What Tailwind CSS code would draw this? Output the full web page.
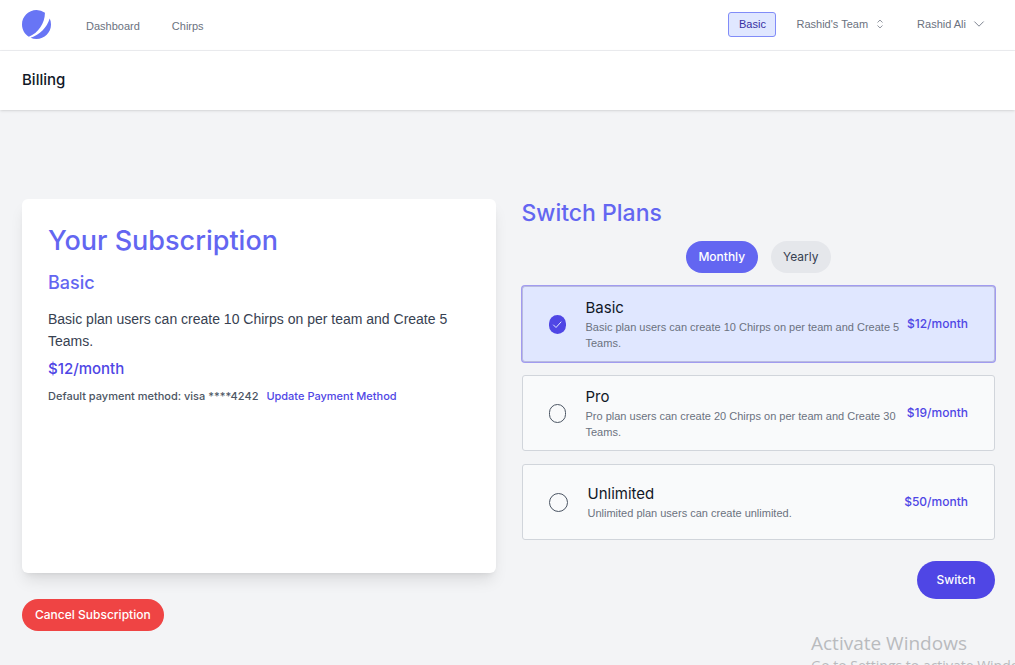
<!DOCTYPE html>
<html lang="en">
<head>
<meta charset="utf-8">
<meta name="viewport" content="width=device-width, initial-scale=1">
<title>Billing</title>
<script src="https://cdn.jsdelivr.net/npm/@tailwindcss/browser@4"></script>
</head>
<body class="relative h-screen overflow-hidden bg-[#f3f4f6] font-['Inter',sans-serif] text-[#111827]">
  <nav class="flex h-[51px] items-center border-b border-[#edeef1] bg-white pl-[22px] pr-[29px] font-['Liberation_Sans',sans-serif] text-[11px] text-[#6b7280]">
    <a href="#" aria-label="Home" class="mb-[2px]">
      <svg class="size-[29px]" viewBox="0 0 48 48" fill="#6875f5"><path d="M11.395 44.428C4.557 40.198 0 32.632 0 24 0 10.745 10.745 0 24 0a23.891 23.891 0 0113.997 4.502c-.2 17.907-11.097 33.245-26.602 39.926z"/><path d="M14.134 45.885A23.914 23.914 0 0024 48c13.255 0 24-10.745 24-24 0-3.516-.756-6.856-2.115-9.866-4.659 15.143-16.608 27.092-31.75 31.751z"/></svg>
    </a>
    <a href="#" class="ml-[35px] pt-[2px]">Dashboard</a>
    <a href="#" class="ml-8 pt-[2px]">Chirps</a>
    <button type="button" class="ml-auto mb-[2px] h-[25px] w-12 rounded-[3px] border border-[#818cf8] bg-[#e0e7ff] text-[#3730a3]">Basic</button>
    <button type="button" class="ml-5 mb-[2px] flex items-center gap-[5px]">Rashid's Team
      <svg class="size-[14px]" viewBox="0 0 24 24" fill="none" stroke="#7b818d" stroke-width="1.5" stroke-linecap="round" stroke-linejoin="round"><path d="M8.25 15L12 18.75 15.75 15m-7.5-6L12 5.25 15.75 9"/></svg>
    </button>
    <button type="button" class="ml-[30px] mb-[2px] flex items-center gap-[6px]">Rashid Ali
      <svg class="size-[14px]" viewBox="0 0 24 24" fill="none" stroke="#6b7280" stroke-width="1.5" stroke-linecap="round" stroke-linejoin="round"><path d="M19.5 8.25l-7.5 7.5-7.5-7.5"/></svg>
    </button>
  </nav>
  <header class="flex h-[59px] items-center bg-white px-[22px] shadow">
    <h1 class="text-[15px] font-medium">Billing</h1>
  </header>

  <main class="grid grid-cols-2 gap-x-[26px] pl-[22px] pr-5 pt-[89px]">
    <div class="flex flex-col items-start gap-[26px]">
      <section class="h-[374px] w-full rounded-md bg-white px-[26px] pt-6 shadow-lg">
        <h2 class="text-[27px] leading-9 font-medium text-[#6366f1]">Your Subscription</h2>
        <h3 class="mt-[10px] text-[18px] leading-7 font-medium text-[#6366f1]">Basic</h3>
        <p class="mt-[11px] font-['Liberation_Sans',sans-serif] text-[14px] leading-[22px] text-[#374151]">Basic plan users can create 10 Chirps on per team and Create 5 Teams.</p>
        <p class="mt-[6px] text-[15px] leading-[22px] font-medium text-[#4f46e5]">$12/month</p>
        <p class="mt-2 text-[11px] leading-4 font-medium text-[#4b5563]">Default payment method: visa ****4242 <a href="#" class="ml-[5px] text-[#4f46e5]">Update Payment Method</a></p>
      </section>
      <button type="button" class="h-8 rounded-full bg-[#ef4444] px-[13px] text-[12px] font-medium text-white">Cancel Subscription</button>
    </div>

    <form class="flex flex-col" onsubmit="return false">
      <h2 class="text-[23px] leading-7 font-medium text-[#6366f1]">Switch Plans</h2>
      <div class="mt-[14px] flex justify-center gap-[13px] text-[12px]">
        <button type="button" class="h-8 w-[72px] rounded-full bg-[#6366f1] font-medium text-white">Monthly</button>
        <button type="button" class="h-8 w-[60px] rounded-full bg-[#e5e7eb] text-[#374151]">Yearly</button>
      </div>
      <div class="mt-[13px] flex flex-col gap-[13px]">
        <label class="flex h-[76px] items-center rounded-[3px] border border-[#b9bbdf] bg-[#e0e7ff] px-[26px] ring-1 ring-[#a19bf0]">
          <span class="grid shrink-0 place-items-center">
            <input type="radio" name="plan" checked class="col-start-1 row-start-1 h-[19px] w-[17px] appearance-none rounded-full bg-[#4f46e5]">
            <svg class="pointer-events-none col-start-1 row-start-1 h-[13px] w-[11px]" viewBox="0 0 11 13" fill="none" stroke="#e0e7ff" stroke-linecap="round" stroke-linejoin="round"><path d="M1.5 7l2.5 2.5 5-5.5"/></svg>
          </span>
          <span class="ml-5 flex-1">
            <span class="block text-[15px] leading-[22px]">Basic</span>
            <span class="block font-['Liberation_Sans',sans-serif] text-[11px] leading-4 text-[#6b7280]">Basic plan users can create 10 Chirps on per team and Create 5 Teams.</span>
          </span>
          <span class="text-[12px] font-medium text-[#4f46e5]">$12/month</span>
        </label>
        <label class="flex h-[76px] items-center rounded-[3px] border border-[#d1d5db] bg-[#f9fafb] px-[26px]">
          <input type="radio" name="plan" class="h-[19px] w-[17px] shrink-0 appearance-none rounded-full border border-[#4b5563]">
          <span class="ml-5 flex-1">
            <span class="block text-[15px] leading-[22px]">Pro</span>
            <span class="block font-['Liberation_Sans',sans-serif] text-[11px] leading-4 text-[#6b7280]">Pro plan users can create 20 Chirps on per team and Create 30 Teams.</span>
          </span>
          <span class="text-[12px] font-medium text-[#4f46e5]">$19/month</span>
        </label>
        <label class="flex h-[76px] items-center rounded-[3px] border border-[#d1d5db] bg-[#f9fafb] px-[26px]">
          <input type="radio" name="plan" class="size-[19px] shrink-0 appearance-none rounded-full border border-[#4b5563]">
          <span class="ml-5 flex-1">
            <span class="block text-[15px] leading-[22px]">Unlimited</span>
            <span class="block font-['Liberation_Sans',sans-serif] text-[11px] leading-4 text-[#6b7280]">Unlimited plan users can create unlimited.</span>
          </span>
          <span class="text-[12px] font-medium text-[#4f46e5]">$50/month</span>
        </label>
      </div>
      <button type="submit" class="mt-[21px] h-[38px] w-[78px] self-end rounded-full bg-[#4f46e5] text-[12px] font-medium text-white">Switch</button>
    </form>
  </main>

  <aside class="pointer-events-none absolute left-[811px] top-[630px] whitespace-nowrap font-['Open_Sans',sans-serif] text-[#b9bbbe]">
    <p class="text-[19px] leading-[26px]">Activate Windows</p>
    <p class="text-[14px] leading-5">Go to Settings to activate Windows.</p>
  </aside>
</body>
</html>
